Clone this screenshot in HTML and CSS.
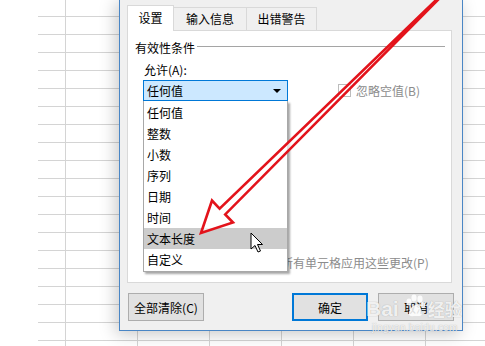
FILE: index.html
```html
<!DOCTYPE html>
<html lang="zh-CN">

<head>
    <meta charset="UTF-8">
    <meta name="viewport" content="width=device-width, initial-scale=1.0">
    <title>数据验证</title>
    <link rel="stylesheet" href="styles.css">
</head>

<body>
    <div class="sheet"></div>

    <div class="dialog">
        <div class="tabs">
            <div class="tab active">设置</div>
            <div class="tab tab-input">输入信息</div>
            <div class="tab tab-error">出错警告</div>
        </div>

        <div class="panel">
            <div class="group-title"><span>有效性条件</span><i class="rule"></i></div>
            <div class="field-label">允许(A):</div>
            <div class="allow-row">
                <div class="combo"><span>任何值</span><i class="caret"></i></div>
                <label class="check disabled"><i class="box"></i>忽略空值(B)</label>
            </div>
            <label class="check disabled apply"><i class="box"></i>对有同样设置的所有单元格应用这些更改(P)</label>

            <ul class="dropdown">
                <li>任何值</li>
                <li>整数</li>
                <li>小数</li>
                <li>序列</li>
                <li>日期</li>
                <li>时间</li>
                <li class="hover">文本长度</li>
                <li>自定义</li>
            </ul>
        </div>

        <div class="buttons">
            <button class="btn">全部清除(C)</button>
            <button class="btn btn-ok">确定</button>
            <button class="btn">取消</button>
        </div>
    </div>

    <svg class="annot" width="485" height="346" viewBox="0 0 485 346">
        <polygon points="438.6,-2.4 219.6,208.6 212,200.5 201,233 233,222.5 225.2,214.4 439.4,-1.6"
            fill="#fff" fill-opacity="0.7" stroke="#e3131b" stroke-width="2.6" stroke-linejoin="miter" />
        <path d="M251 233 L251 249 L255 245.5 L258 252 L260.5 251 L257.5 244.5 L262.5 244.5 Z"
            fill="#fff" stroke="#000" stroke-width="1" stroke-linejoin="round" />
    </svg>

    <div class="watermark">
        <div class="wm-logo">
            <span class="wm-bai">Bai</span>
            <svg class="wm-paw" width="20" height="24" viewBox="0 0 20 24">
                <ellipse cx="4" cy="8" rx="2.6" ry="3.4" />
                <ellipse cx="9" cy="4" rx="2.6" ry="3.4" />
                <ellipse cx="15" cy="5" rx="2.6" ry="3.4" />
                <ellipse cx="18" cy="11" rx="2.2" ry="3" />
                <path d="M4 20 C4 14 9 11 11 11 C14 11 17 15 17 19 C17 23 13 22 10.5 22 C8 22 4 23 4 20 Z" />
            </svg>
            <span class="wm-jy">经验</span>
        </div>
        <div class="wm-url">jingyan.baidu.com</div>
    </div>
</body>

</html>
```

FILE: styles.css
```css
body {
    font-family: "Noto Sans CJK SC", "Liberation Sans", sans-serif;
    font-size: 12px;
    line-height: 16px;
    color: #000;
    margin: 0;
    padding: 0;
    width: 485px;
    height: 346px;
    overflow: hidden;
    position: relative;
    background-color: #fff;
}

.sheet {
    margin-left: 38px;
    height: 346px;
    background-image:
        repeating-linear-gradient(to right, transparent 0 27px, #d4d4d4 27px 28px, transparent 28px 72px),
        repeating-linear-gradient(to bottom, transparent 0 17px, #d4d4d4 17px 18px);
    background-position: 0 0, 0 -1px;
}

.dialog {
    position: absolute;
    left: 119px;
    top: -1px;
    width: 344px;
    height: 332px;
    box-sizing: border-box;
    border: 1px solid #4a86c5;
    background-color: #f0f0f0;
    padding-left: 7px;
    box-shadow: -3px 3px 16px rgba(0, 0, 0, 0.22);
}

.tabs {
    display: flex;
    align-items: flex-end;
    height: 25px;
    margin-top: 5px;
}

.tab {
    box-sizing: border-box;
    height: 23px;
    border: 1px solid #d9d9d9;
    border-bottom: none;
    text-align: center;
    line-height: 22px;
    background-color: #f0f0f0;
}

.tab.active {
    position: relative;
    z-index: 1;
    width: 47px;
    height: 26px;
    margin-bottom: -1px;
    line-height: 24px;
    background-color: #fff;
}

.tab-input {
    width: 74px;
    margin-left: -1px;
}

.tab-error {
    width: 71px;
    margin-left: -1px;
}

.panel {
    position: relative;
    box-sizing: border-box;
    width: 325px;
    height: 253px;
    background-color: #fff;
    border: 1px solid #d9d9d9;
}

.group-title {
    display: flex;
    height: 16px;
    margin: 9px 6px 0 7px;
}

.group-title .rule {
    flex: 1;
    height: 1px;
    margin: 6px 0 0 2px;
    background-color: #a5a5a5;
}

.field-label {
    margin: 6px 0 0 16px;
}

.allow-row {
    display: flex;
    align-items: center;
    margin: 2px 0 0 15px;
    height: 21px;
}

.combo {
    box-sizing: border-box;
    width: 145px;
    height: 21px;
    border: 1px solid #0078d7;
    background-color: #cce8ff;
    padding: 0 6px 0 3px;
    display: flex;
    align-items: center;
    justify-content: space-between;
}

.caret {
    width: 0;
    height: 0;
    border-left: 4px solid transparent;
    border-right: 4px solid transparent;
    border-top: 4px solid #000;
}

.check {
    display: flex;
    align-items: center;
    height: 16px;
}

.check .box {
    box-sizing: border-box;
    width: 13px;
    height: 13px;
    border: 1px solid #bcbcbc;
    background-color: #fff;
    margin-right: 5px;
}

.check.disabled {
    color: #8c8c8c;
}

.allow-row .check {
    margin-left: 50px;
}

.check.apply {
    margin: 154px 0 0 51px;
}

.dropdown {
    position: absolute;
    left: 15px;
    top: 70px;
    width: 145px;
    box-sizing: border-box;
    margin: 0;
    padding: 1px 0 1px;
    list-style: none;
    background-color: #fff;
    border: 1px solid #a8a8a8;
    border-top: none;
    box-shadow: 2px 2px 2px rgba(0, 0, 0, 0.35);
    z-index: 2;
}

.dropdown li {
    height: 21px;
    line-height: 21px;
    padding-left: 3px;
}

.dropdown li.hover {
    background-color: #cccccc;
}

.buttons {
    display: flex;
    margin-top: 10px;
    padding: 0 8px 0 1px;
}

.btn {
    box-sizing: border-box;
    width: 76px;
    height: 28px;
    font-family: inherit;
    font-size: 12px;
    color: #000;
    background-color: #e1e1e1;
    border: 1px solid #adadad;
    padding: 0;
}

.btn-ok {
    margin-left: auto;
    margin-right: 10px;
    border: 2px solid #0078d7;
}

.annot {
    position: absolute;
    left: 0;
    top: 0;
    z-index: 5;
    pointer-events: none;
}

.watermark {
    position: absolute;
    left: 366px;
    top: 292px;
    z-index: 6;
    color: rgba(255, 255, 255, 0.85);
    text-shadow: 0 0 1px rgba(110, 110, 110, 0.6);
    pointer-events: none;
}

.wm-logo {
    display: flex;
    align-items: flex-end;
    height: 28px;
}

.wm-bai {
    font-family: "Liberation Sans", sans-serif;
    font-size: 21px;
    font-weight: bold;
    line-height: 22px;
}

.wm-paw {
    fill: rgba(255, 255, 255, 0.85);
    margin: 0 3px 2px 6px;
}

.wm-jy {
    font-size: 17px;
    line-height: 22px;
    font-weight: bold;
}

.wm-url {
    font-family: "Liberation Sans", sans-serif;
    font-size: 10px;
    line-height: 12px;
    margin: 2px 0 0 6px;
    letter-spacing: 0.3px;
}
```
